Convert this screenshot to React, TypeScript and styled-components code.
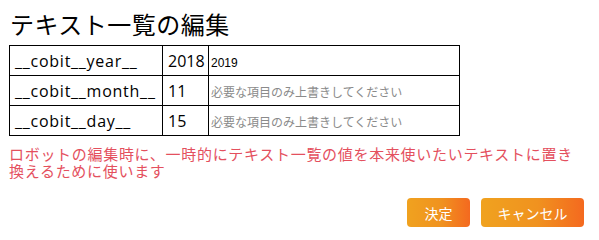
import styled, { createGlobalStyle } from "styled-components";

const Global = createGlobalStyle`
  html, body {
    margin: 0;
    padding: 0;
    background: #fff;
  }
  body {
    font-family: "Noto Sans", "Noto Sans CJK JP", sans-serif;
    color: #000;
  }
`;

const Dialog = styled.div`
  width: 599px;
  height: 237px;
  box-sizing: border-box;
  padding: 8px 8px 0 9px;
  display: flex;
  flex-direction: column;
`;

const Title = styled.h2`
  margin: 0 0 5px 1px;
  font-size: 24px;
  font-weight: 400;
  line-height: 32px;
  letter-spacing: 0.5px;
  font-family: "Noto Sans CJK JP", sans-serif;
`;

const Table = styled.table`
  border-collapse: collapse;
  width: 451px;
  table-layout: fixed;
`;

const Cell = styled.td<{ $w?: number; $key?: boolean }>`
  border: 1px solid #000;
  height: 29px;
  padding: 0 0 0 5px;
  font-size: 16px;
  font-family: "Open Sans", "Noto Sans CJK JP", sans-serif;
  letter-spacing: ${(p) => (p.$key ? "0.75px" : "0")};
  white-space: nowrap;
  width: ${(p) => (p.$w ? `${p.$w}px` : "auto")};
`;

const InputCell = styled.td`
  border: 1px solid #000;
  padding: 0 0 0 2px;
`;

const Input = styled.input`
  border: none;
  outline: none;
  width: 100%;
  box-sizing: border-box;
  padding: 0;
  font-size: 12px;
  font-family: "Liberation Sans", "Noto Sans CJK JP", sans-serif;
  color: #000;
  &::placeholder {
    color: #8a8a8a;
  }
`;

const Note = styled.p`
  margin: 9px 0 0 0;
  max-width: 576px;
  font-size: 15px;
  line-height: 17px;
  letter-spacing: 0.7px;
  color: #e4505e;
  font-family: "Noto Sans CJK JP", sans-serif;
`;

const Actions = styled.div`
  margin-top: auto;
  margin-bottom: 10px;
  padding-right: 7px;
  display: flex;
  justify-content: flex-end;
  gap: 11px;
`;

const Button = styled.button<{ $w: number }>`
  width: ${(p) => p.$w}px;
  height: 29px;
  border: none;
  border-radius: 4px;
  background: linear-gradient(90deg, #f0a21f 0%, #f0921f 55%, #f4691f 100%);
  color: #fff;
  font-size: 14px;
  font-family: "Noto Sans CJK JP", sans-serif;
  padding: 0;
  cursor: pointer;
`;

const rows = [
  { key: "__cobit__year__", value: "2018", input: "2019" },
  { key: "__cobit__month__", value: "11", input: "" },
  { key: "__cobit__day__", value: "15", input: "" },
];

export default function App() {
  return (
    <>
      <Global />
      <Dialog lang="ja">
        <Title>テキスト一覧の編集</Title>
        <Table>
          <tbody>
            {rows.map((r) => (
              <tr key={r.key}>
                <Cell $w={147} $key>
                  {r.key}
                </Cell>
                <Cell $w={40}>{r.value}</Cell>
                <InputCell>
                  <Input defaultValue={r.input} placeholder="必要な項目のみ上書きしてください" />
                </InputCell>
              </tr>
            ))}
          </tbody>
        </Table>
        <Note>
          ロボットの編集時に、一時的にテキスト一覧の値を本来使いたいテキストに置き換えるために使います
        </Note>
        <Actions>
          <Button $w={63}>決定</Button>
          <Button $w={103}>キャンセル</Button>
        </Actions>
      </Dialog>
    </>
  );
}
